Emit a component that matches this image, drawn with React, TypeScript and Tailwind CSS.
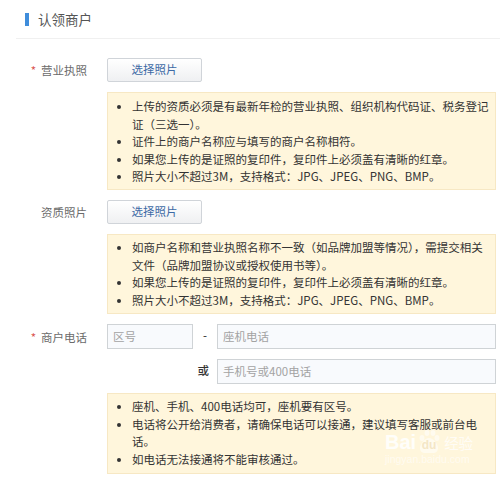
const Notice = ({ items, className }: { items: string[]; className: string }) => (
  <div className={`ml-[107px] w-[389px] border border-[#f7e8c4] bg-[#fff6dc] pl-[24px] pr-1 text-[11.5px] leading-[17.5px] text-[#333] ${className}`}>
    <ul className="list-disc">
      {items.map((item) => (
        <li key={item}>{item}</li>
      ))}
    </ul>
  </div>
);

const PhotoButton = () => (
  <button className="block h-6 w-[95px] rounded-[2px] border border-[#d0d4d9] bg-gradient-to-b from-white to-[#eff0f2] text-[11.5px] text-[#3d6aa5]">
    选择照片
  </button>
);

const Label = ({ text, required }: { text: string; required?: boolean }) => (
  <div className="flex w-[87px] shrink-0 justify-end text-[11.5px] leading-6 text-[#6b6b6b]">
    {required && <span className="mr-[5px] text-[#d9534f]">*</span>}
    {text}
  </div>
);

const PhoneInput = ({ placeholder, className }: { placeholder: string; className: string }) => (
  <input
    placeholder={placeholder}
    className={`h-[25px] border border-[#cfd3d6] bg-[#f8fafd] px-[5px] pb-[2px] text-[11.5px] outline-none placeholder:text-[#a3a3a3] ${className}`}
  />
);

export default function App() {
  return (
    <div className="relative h-[477px] w-[500px] overflow-hidden bg-white font-['Noto_Sans_CJK_SC',sans-serif]">
      <div className="ml-[16px] flex h-[39px] items-center border-b border-[#f0f0f0] pl-[9px]">
        <span className="h-[13px] w-[4px] bg-[#3f8ddb]" />
        <span className="ml-[9px] text-[13.5px] text-[#555]">认领商户</span>
      </div>

      <div className="mt-[19px] flex">
        <Label text="营业执照" required />
        <div className="ml-[20px]">
          <PhotoButton />
        </div>
      </div>
      <Notice
        className="mt-[10px] h-[98px] pt-[5px]"
        items={[
          "上传的资质必须是有最新年检的营业执照、组织机构代码证、税务登记证（三选一）。",
          "证件上的商户名称应与填写的商户名称相符。",
          "如果您上传的是证照的复印件，复印件上必须盖有清晰的红章。",
          "照片大小不超过3M，支持格式：JPG、JPEG、PNG、BMP。",
        ]}
      />

      <div className="mt-[10px] flex">
        <Label text="资质照片" />
        <div className="ml-[20px]">
          <PhotoButton />
        </div>
      </div>
      <Notice
        className="mt-[10px] h-[80px] pt-[4px]"
        items={[
          "如商户名称和营业执照名称不一致（如品牌加盟等情况），需提交相关文件（品牌加盟协议或授权使用书等）。",
          "如果您上传的是证照的复印件，复印件上必须盖有清晰的红章。",
          "照片大小不超过3M，支持格式：JPG、JPEG、PNG、BMP。",
        ]}
      />

      <div className="mt-[10px] flex items-center">
        <Label text="商户电话" required />
        <PhoneInput placeholder="区号" className="ml-[20px] w-[86px]" />
        <span className="w-[24px] pb-[2px] text-center text-[11.5px] text-[#222]">-</span>
        <PhoneInput placeholder="座机电话" className="w-[279px]" />
      </div>
      <div className="mt-[10px] flex items-center justify-end pr-[4px]">
        <span className="mr-[8px] pb-[2px] text-[11.5px] font-medium text-[#333]">或</span>
        <PhoneInput placeholder="手机号或400电话" className="w-[279px]" />
      </div>
      <Notice
        className="mt-[9px] h-[81px] pt-[4px]"
        items={[
          "座机、手机、400电话均可，座机要有区号。",
          "电话将公开给消费者，请确保电话可以接通，建议填写客服或前台电话。",
          "如电话无法接通将不能审核通过。",
        ]}
      />

      {/* baidu watermark */}
      <div className="absolute left-[385px] top-[429px] flex items-end text-white/85">
        <span className="font-['Liberation_Sans',sans-serif] text-[20px] font-bold leading-[22px]">Bai</span>
        <span className="relative ml-[1px] flex h-[24px] w-[24px] items-end justify-center">
          <svg viewBox="0 0 24 24" className="absolute inset-0 h-6 w-6 fill-white/55">
            <ellipse cx="5" cy="9" rx="2.4" ry="3" />
            <ellipse cx="10" cy="4" rx="2.4" ry="3" />
            <ellipse cx="16" cy="4" rx="2.4" ry="3" />
            <ellipse cx="20" cy="9" rx="2.4" ry="3" />
            <path d="M12 9c-4 0-9 6-9 10 0 3 2 5 5 5h8c3 0 5-2 5-5 0-4-5-10-9-10z" />
          </svg>
          <span className="relative font-['Liberation_Sans',sans-serif] text-[12px] font-bold leading-[16px] text-[#f4e6c6]">du</span>
        </span>
        <span className="ml-[3px] text-[14.5px] leading-[20px] text-white/75">经验</span>
      </div>
      <div className="absolute left-[385px] top-[454px] font-['Liberation_Sans',sans-serif] text-[10.5px] leading-none text-white/60">jingyan.baidu.com</div>
    </div>
  );
}
